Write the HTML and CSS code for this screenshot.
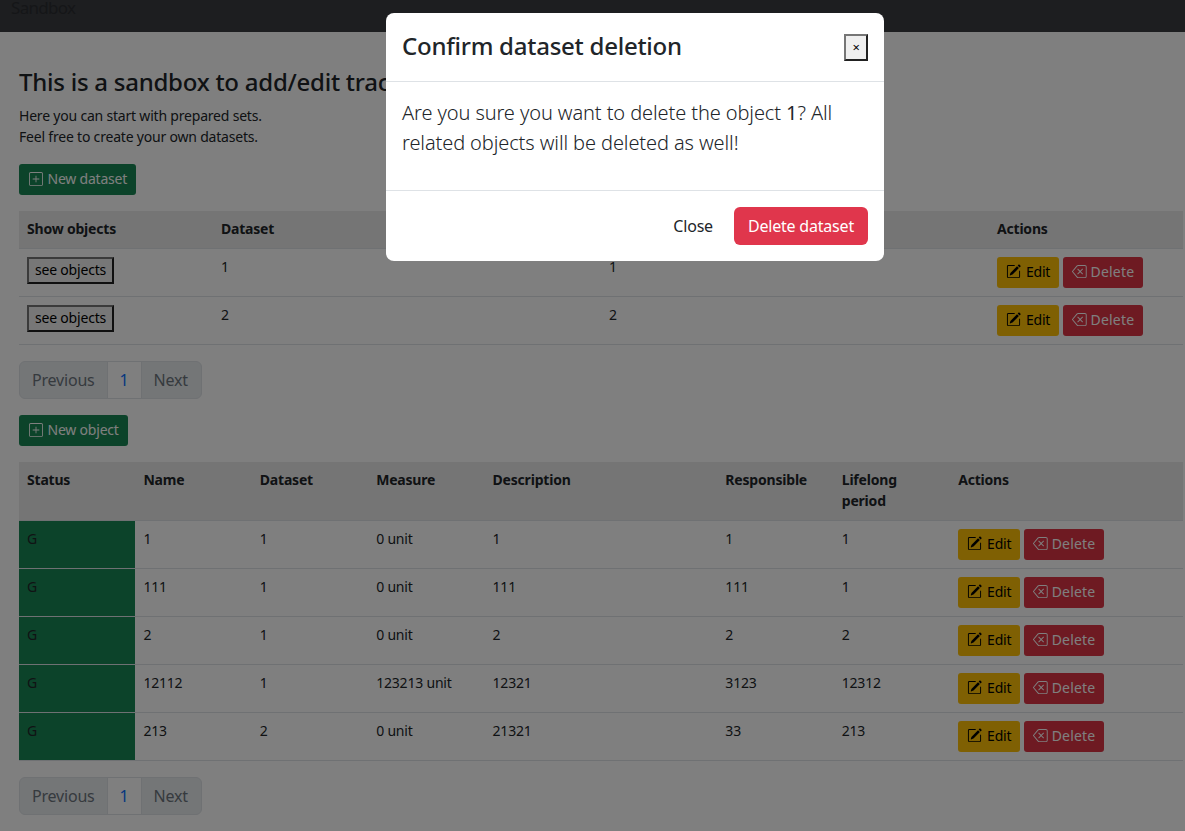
FILE: index.html
```html
<!DOCTYPE html>
<html lang="en">
<head>
    <meta charset="UTF-8">
    <title>Sandbox</title>
    <link rel="stylesheet" href="styles.css">
</head>
<body>
    <svg class="icon-defs" xmlns="http://www.w3.org/2000/svg">
        <symbol id="i-plus" viewBox="0 0 16 16">
            <path d="M14 1a1 1 0 0 1 1 1v12a1 1 0 0 1-1 1H2a1 1 0 0 1-1-1V2a1 1 0 0 1 1-1h12zM2 0a2 2 0 0 0-2 2v12a2 2 0 0 0 2 2h12a2 2 0 0 0 2-2V2a2 2 0 0 0-2-2H2z"/>
            <path d="M8 4a.5.5 0 0 1 .5.5v3h3a.5.5 0 0 1 0 1h-3v3a.5.5 0 0 1-1 0v-3h-3a.5.5 0 0 1 0-1h3v-3A.5.5 0 0 1 8 4z"/>
        </symbol>
        <symbol id="i-edit" viewBox="0 0 16 16">
            <path d="M15.502 1.94a.5.5 0 0 1 0 .706L14.459 3.69l-2-2L13.502.646a.5.5 0 0 1 .707 0l1.293 1.293zm-1.75 2.456-2-2L4.939 9.21a.5.5 0 0 0-.121.196l-.805 2.414a.25.25 0 0 0 .316.316l2.414-.805a.5.5 0 0 0 .196-.12l6.813-6.814z"/>
            <path fill-rule="evenodd" d="M1 13.5A1.5 1.5 0 0 0 2.5 15h11a1.5 1.5 0 0 0 1.5-1.5v-6a.5.5 0 0 0-1 0v6a.5.5 0 0 1-.5.5h-11a.5.5 0 0 1-.5-.5v-11a.5.5 0 0 1 .5-.5H9a.5.5 0 0 0 0-1H2.5A1.5 1.5 0 0 0 1 2.5v11z"/>
        </symbol>
        <symbol id="i-delete" viewBox="0 0 16 16">
            <path d="M5.83 5.146a.5.5 0 0 0 0 .708L7.975 8l-2.147 2.146a.5.5 0 0 0 .707.708l2.147-2.147 2.146 2.147a.5.5 0 0 0 .707-.708L9.39 8l2.146-2.146a.5.5 0 0 0-.707-.708L8.683 7.293 6.536 5.146a.5.5 0 0 0-.707 0z"/>
            <path d="M13.683 1a2 2 0 0 1 2 2v10a2 2 0 0 1-2 2h-7.08a2 2 0 0 1-1.519-.698L.241 8.65a1 1 0 0 1 0-1.302L5.084 1.7A2 2 0 0 1 6.603 1h7.08zm-7.08 1a1 1 0 0 0-.76.35L1 8l4.844 5.65a1 1 0 0 0 .759.35h7.08a1 1 0 0 0 1-1V3a1 1 0 0 0-1-1h-7.08z"/>
        </symbol>
    </svg>

    <nav class="navbar"><span class="brand">Sandbox</span></nav>

    <main class="page">
        <h1>This is a sandbox to add/edit tracking objects</h1>
        <p class="intro">Here you can start with prepared sets.<br>Feel free to create your own datasets.</p>

        <button class="btn btn-new"><svg class="icon"><use href="#i-plus"/></svg> New dataset</button>

        <table class="data-table">
            <colgroup><col span="6" class="col-six"></colgroup>
            <thead>
                <tr><th>Show objects</th><th>Dataset</th><th></th><th></th><th></th><th>Actions</th></tr>
            </thead>
            <tbody>
                <tr>
                    <td class="button-cell"><button class="see-objects">see objects</button></td>
                    <td>1</td><td></td><td>1</td><td></td>
                    <td class="button-cell">
                        <button class="btn btn-edit"><svg class="icon"><use href="#i-edit"/></svg> Edit</button>
                        <button class="btn btn-delete"><svg class="icon"><use href="#i-delete"/></svg> Delete</button>
                    </td>
                </tr>
                <tr>
                    <td class="button-cell"><button class="see-objects">see objects</button></td>
                    <td>2</td><td></td><td>2</td><td></td>
                    <td class="button-cell">
                        <button class="btn btn-edit"><svg class="icon"><use href="#i-edit"/></svg> Edit</button>
                        <button class="btn btn-delete"><svg class="icon"><use href="#i-delete"/></svg> Delete</button>
                    </td>
                </tr>
            </tbody>
        </table>

        <ul class="pagination">
            <li class="page-link disabled">Previous</li>
            <li class="page-link current">1</li>
            <li class="page-link disabled">Next</li>
        </ul>

        <button class="btn btn-new"><svg class="icon"><use href="#i-plus"/></svg> New object</button>

        <table class="data-table">
            <colgroup>
                <col span="4" class="col-ten"><col class="col-ten-wide"><col span="2" class="col-ten"><col class="col-ten-wide">
            </colgroup>
            <thead>
                <tr><th>Status</th><th>Name</th><th>Dataset</th><th>Measure</th><th>Description</th><th>Responsible</th><th>Lifelong period</th><th>Actions</th></tr>
            </thead>
            <tbody>
                <tr>
                    <td class="status-green">G</td><td>1</td><td>1</td><td>0 unit</td><td>1</td><td>1</td><td>1</td>
                    <td class="button-cell">
                        <button class="btn btn-edit"><svg class="icon"><use href="#i-edit"/></svg> Edit</button>
                        <button class="btn btn-delete"><svg class="icon"><use href="#i-delete"/></svg> Delete</button>
                    </td>
                </tr>
                <tr>
                    <td class="status-green">G</td><td>111</td><td>1</td><td>0 unit</td><td>111</td><td>111</td><td>1</td>
                    <td class="button-cell">
                        <button class="btn btn-edit"><svg class="icon"><use href="#i-edit"/></svg> Edit</button>
                        <button class="btn btn-delete"><svg class="icon"><use href="#i-delete"/></svg> Delete</button>
                    </td>
                </tr>
                <tr>
                    <td class="status-green">G</td><td>2</td><td>1</td><td>0 unit</td><td>2</td><td>2</td><td>2</td>
                    <td class="button-cell">
                        <button class="btn btn-edit"><svg class="icon"><use href="#i-edit"/></svg> Edit</button>
                        <button class="btn btn-delete"><svg class="icon"><use href="#i-delete"/></svg> Delete</button>
                    </td>
                </tr>
                <tr>
                    <td class="status-green">G</td><td>12112</td><td>1</td><td>123213 unit</td><td>12321</td><td>3123</td><td>12312</td>
                    <td class="button-cell">
                        <button class="btn btn-edit"><svg class="icon"><use href="#i-edit"/></svg> Edit</button>
                        <button class="btn btn-delete"><svg class="icon"><use href="#i-delete"/></svg> Delete</button>
                    </td>
                </tr>
                <tr>
                    <td class="status-green">G</td><td>213</td><td>2</td><td>0 unit</td><td>21321</td><td>33</td><td>213</td>
                    <td class="button-cell">
                        <button class="btn btn-edit"><svg class="icon"><use href="#i-edit"/></svg> Edit</button>
                        <button class="btn btn-delete"><svg class="icon"><use href="#i-delete"/></svg> Delete</button>
                    </td>
                </tr>
            </tbody>
        </table>

        <ul class="pagination">
            <li class="page-link disabled">Previous</li>
            <li class="page-link current">1</li>
            <li class="page-link disabled">Next</li>
        </ul>
    </main>

    <div class="backdrop"></div>

    <div class="modal">
        <div class="modal-header">
            <h2>Confirm dataset deletion</h2>
            <button class="modal-close">×</button>
        </div>
        <div class="modal-body">Are you sure you want to delete the object <span class="object-name">1</span>? All related objects will be deleted as well!</div>
        <div class="modal-footer">
            <button class="btn-footer btn-close">Close</button>
            <button class="btn-footer btn-danger">Delete dataset</button>
        </div>
    </div>
</body>
</html>
```

FILE: styles.css
```css
html, body {
    height: 100%;
    overflow: hidden;
}
body {
    margin: 0;
    font-family: "Noto Sans", sans-serif;
    font-size: 14px;
    line-height: 21px;
    letter-spacing: -0.2px;
    color: #212529;
    background-color: #fff;
}
button {
    font-family: inherit;
    letter-spacing: inherit;
}
.icon-defs {
    display: none;
}
.icon {
    width: 15px;
    height: 15px;
    fill: currentColor;
    vertical-align: -2px;
}
.btn-new .icon {
    width: 14px;
    height: 14px;
    margin: 0 1px;
}
.btn-edit .icon {
    margin-right: 1.5px;
}
.navbar {
    height: 32px;
    padding-left: 11px;
    background-color: #3a3c40;
    overflow: hidden;
}
.brand {
    display: block;
    font-size: 17px;
    line-height: 16px;
    letter-spacing: -0.7px;
    color: #2a2c30;
}
.page {
    padding: 35px 2px 0 19px;
}
h1 {
    margin: 0 0 9px;
    font-size: 24px;
    line-height: 29px;
    font-weight: 500;
    letter-spacing: -0.25px;
    white-space: nowrap;
}
.intro {
    margin: 0 0 17px;
}
.btn {
    height: 31px;
    padding: 3px 8px 5px;
    border: 1px solid transparent;
    border-radius: 3px;
    font-size: 14px;
    line-height: 21px;
}
.btn-new {
    display: block;
    background-color: #198754;
    color: #fff;
}
.btn-edit {
    background-color: #ffc107;
    color: #000;
}
.btn-delete {
    background-color: #dc3545;
    color: #fff;
    letter-spacing: 0.2px;
}
.data-table {
    width: 1164px;
    margin-top: 16px;
    table-layout: fixed;
    border-collapse: collapse;
}
.col-six {
    width: 194px;
}
.col-ten {
    width: 116.4px;
}
.col-ten-wide {
    width: 232.8px;
}
.data-table th, .data-table td {
    padding: 7px 8px 9px;
    text-align: left;
    vertical-align: top;
    border-bottom: 1px solid #dee2e6;
}
.data-table th {
    background-color: #ebebeb;
    font-weight: 700;
}
.data-table .button-cell {
    padding: 8px;
}
.status-green {
    background-color: #198754;
}
.see-objects {
    height: 27px;
    padding: 0 6px 2px;
    border: 2px outset #767676;
    background-color: #efefef;
    color: #000;
    font-size: 14px;
}
.pagination {
    display: flex;
    width: max-content;
    margin: 16px 0;
    padding: 0;
    list-style: none;
    font-size: 16px;
    line-height: 24px;
}
.page-link {
    padding: 6px 12px;
    border: 1px solid #dee2e6;
    margin-left: -1px;
}
.page-link:first-child {
    margin-left: 0;
    border-radius: 6px 0 0 6px;
}
.page-link:last-child {
    padding-right: 13px;
    border-radius: 0 6px 6px 0;
}
.disabled {
    background-color: #e9ecef;
    color: #6c757d;
}
.current {
    background-color: #fff;
    color: #0d6efd;
}
.backdrop {
    position: fixed;
    inset: 0;
    background-color: rgba(0, 0, 0, 0.5);
}
.modal {
    position: fixed;
    top: 13px;
    left: 386px;
    width: 498px;
    background-color: #fff;
    border-radius: 8px;
}
.modal-header {
    display: flex;
    align-items: center;
    justify-content: space-between;
    height: 68px;
    padding: 0 16px;
    border-bottom: 1px solid #dee2e6;
}
.modal-header h2 {
    margin: 0 0 3px;
    font-size: 24px;
    line-height: 29px;
    font-weight: 500;
    letter-spacing: -0.25px;
}
.modal-close {
    width: 24px;
    height: 27px;
    padding: 0;
    border: 2px outset #767676;
    background-color: #efefef;
    color: #000;
    font-size: 13px;
    line-height: 1;
}
.modal-body {
    height: 108px;
    box-sizing: border-box;
    padding: 16px;
    font-size: 20px;
    line-height: 30px;
    font-weight: 300;
    letter-spacing: -0.1px;
}
.object-name {
    font-weight: 400;
}
.modal-footer {
    display: flex;
    align-items: center;
    justify-content: flex-end;
    gap: 7px;
    height: 70px;
    padding: 0 16px;
    border-top: 1px solid #dee2e6;
}
.btn-footer {
    height: 38px;
    padding: 6px 14px;
    border: 0;
    border-radius: 6px;
    font-size: 16px;
}
.btn-close {
    background-color: transparent;
    color: #212529;
}
.btn-danger {
    background-color: #e0364c;
    color: #fff;
}
```
